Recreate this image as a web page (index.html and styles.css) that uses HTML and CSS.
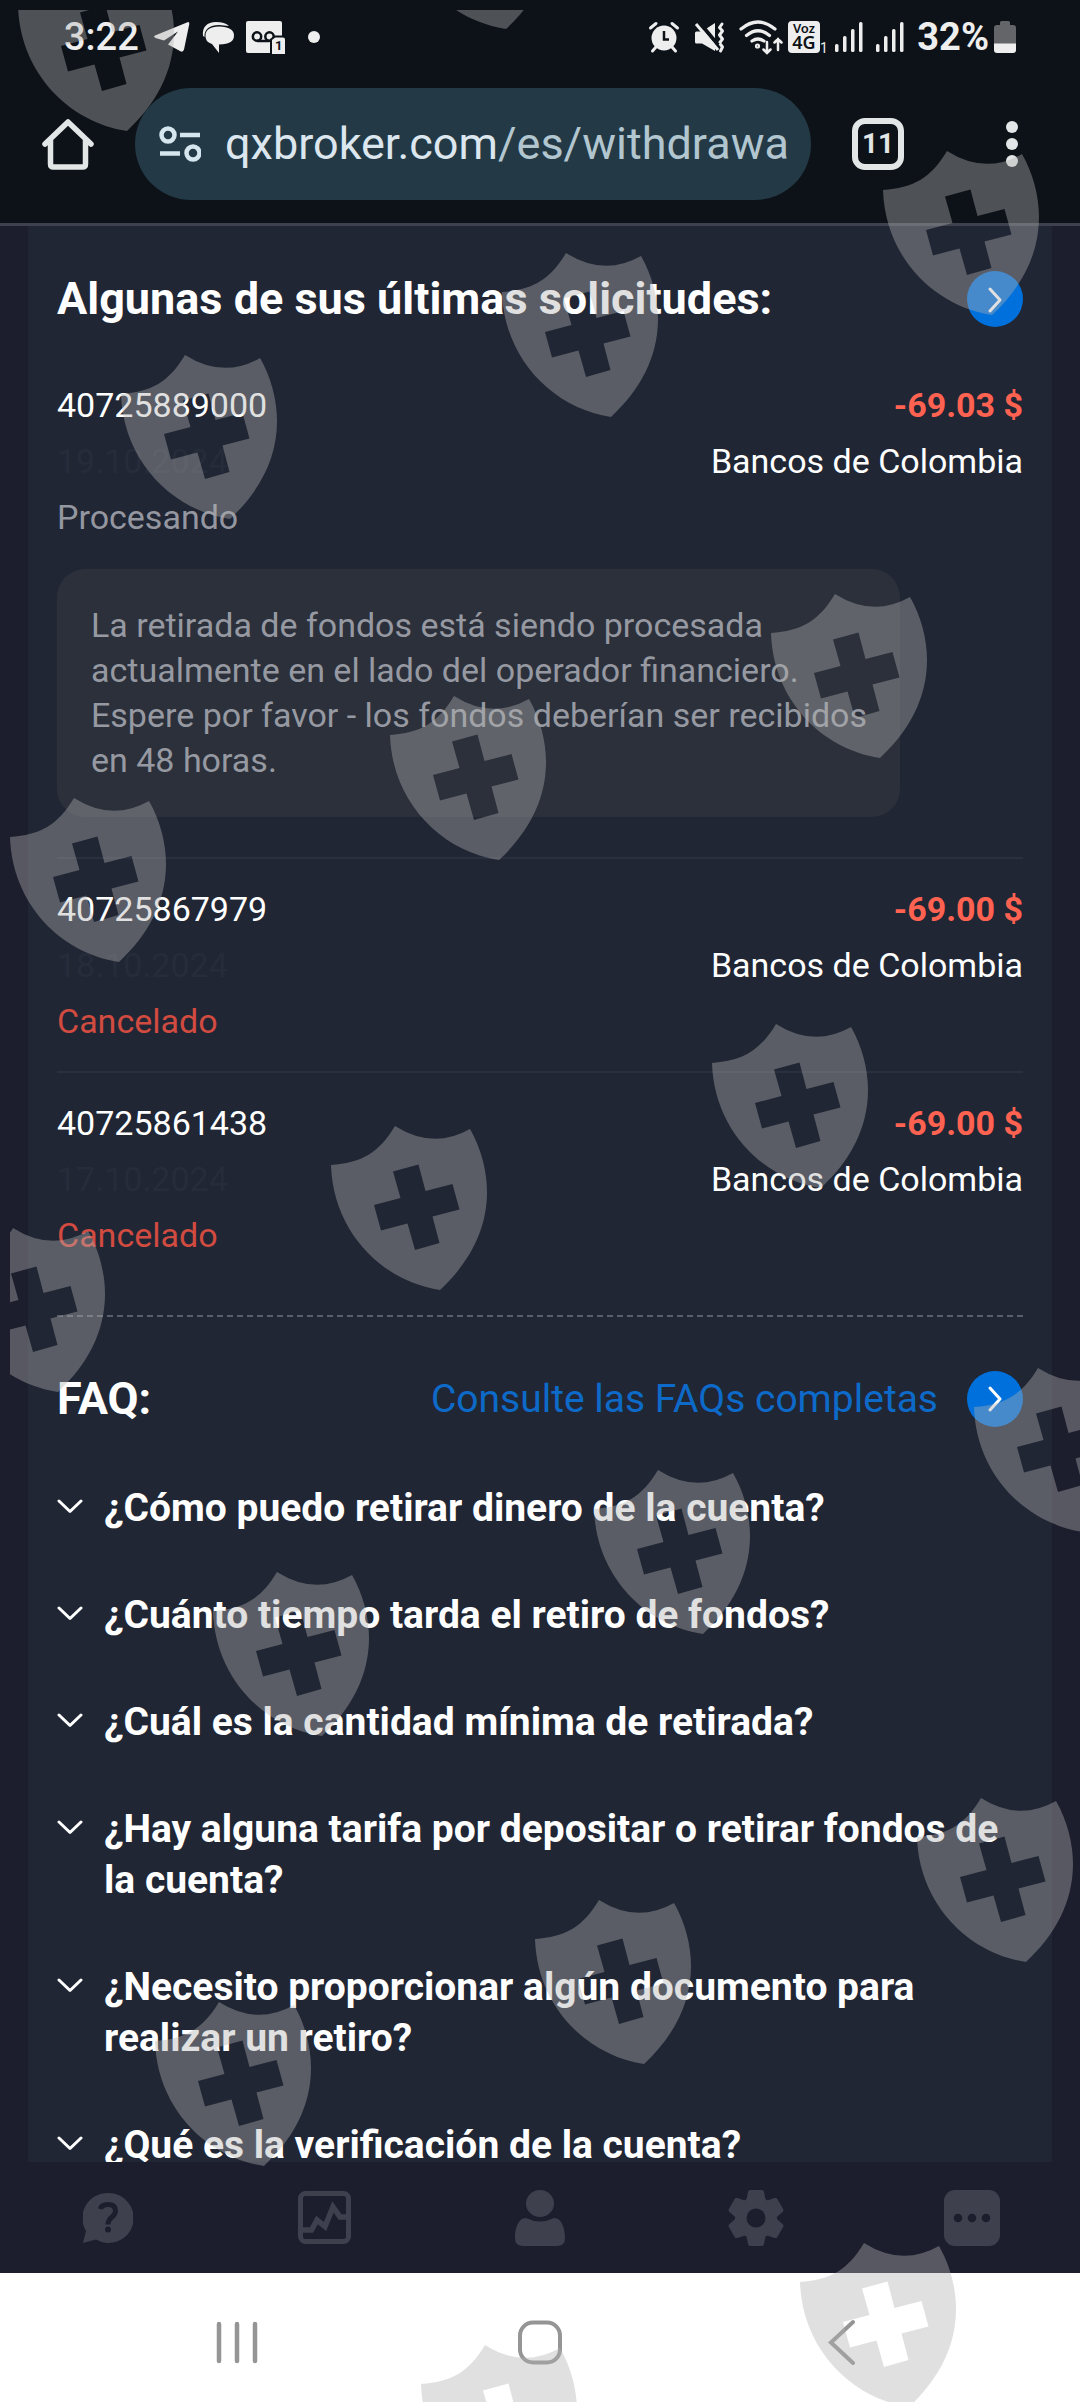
FILE: index.html
```html
<!DOCTYPE html>
<html lang="es">
<head>
<meta charset="utf-8">
<meta name="viewport" content="width=device-width, initial-scale=1">
<title>Retirada</title>
<link rel="stylesheet" href="styles.css">
</head>
<body>
<header class="chrome">
  <div class="status">
    <div class="status-left">
      <span class="clock">3:22</span>
      <svg width="38" height="32" viewBox="0 0 38 32" fill="#eeeeee" aria-hidden="true"><path d="M3 14.500 35.500 1.200Q37.500.600 37.300 3L32 28.500Q31 31.800 28 30L16 23.500 26 10.500 12 19.500 3.500 17Q1 15.600 3 14.500z"/></svg>
      <svg width="32" height="32" viewBox="0 0 32 32" fill="#eeeeee" aria-hidden="true"><path d="M1 15C0 6 5 1 14 1Q23 1 27 5L17 4C8 4 2 8 2.500 16z"/><path d="M17 5.500C27 5.500 32 9 32 14.500S28 23.500 17 23.500V32L10 23C5 21.500 3.500 18.500 3.500 14.500 3.500 9 8 5.500 17 5.500z"/></svg>
      <svg width="39" height="32" viewBox="0 0 39 32" aria-hidden="true"><rect width="36" height="32" rx="2" fill="#eeeeee"/><g fill="none" stroke="#0c1218" stroke-width="2.500"><circle cx="11" cy="15.500" r="4.200"/><circle cx="23.500" cy="15.500" r="4.200"/><path d="M11 20H23.500"/></g><path d="M25 34V18.500L29 15.500H37Q40 15.500 40 18.500V34z" fill="#eeeeee" stroke="#0c1218" stroke-width="2"/><text x="29" y="29" class="sim">1</text></svg>
      <svg width="34" height="32" viewBox="0 0 34 32" aria-hidden="true"><circle cx="17" cy="16" r="6" fill="#eeeeee"/></svg>
    </div>
    <div class="status-right">
      <svg width="40" height="32" viewBox="0 0 40 32" aria-hidden="true"><circle cx="15" cy="17" r="12.500" fill="#eeeeee"/><path d="M1.500 7 7 2.500M28.500 7 23 2.500M7 26 3.500 30M23 26 26.500 30" stroke="#eeeeee" stroke-width="3" stroke-linecap="round"/><path d="M15 10V18.500H20" fill="none" stroke="#0c1218" stroke-width="2.500"/></svg>
      <svg width="40" height="32" viewBox="0 0 40 32" aria-hidden="true"><path d="M1 12Q1 10.500 2.500 10.500H8L21 2V30L8 22.500H2.500Q1 22.500 1 21z" fill="#eeeeee"/><path d="M28 3 25.500 6.500 28.500 10 25.500 14 28.500 18 25.500 22 28.500 26 26.500 30" fill="none" stroke="#eeeeee" stroke-width="3" stroke-linecap="round" stroke-linejoin="round"/><path d="M5 1 24 24" stroke="#0c1218" stroke-width="4"/><path d="M2 3 24 29" stroke="#eeeeee" stroke-width="3"/></svg>
      <svg width="44" height="36" viewBox="0 0 44 36" fill="none" stroke="#eeeeee" stroke-width="3.200" stroke-linecap="round" aria-hidden="true"><path d="M2 10Q19-4 36 10M7.500 16.500Q19 7 30.500 16.500M13 22Q19 18 25 22"/><circle cx="18.500" cy="27" r="1"/><path d="M28 23V33.500M24.500 30.500 28 34 31.500 30.500M39 31V20M35.500 23.500 39 20 42.500 23.500" stroke-width="2.500"/></svg>
      <svg width="42" height="32" viewBox="0 0 42 32" aria-hidden="true"><rect width="32" height="32" rx="4" fill="#eeeeee"/><text x="16" y="12" class="voz">Voz</text><text x="16" y="28" class="gen">4G</text><text x="32" y="32" class="slot">1</text></svg>
      <svg width="36" height="32" viewBox="0 0 36 32" fill="#eeeeee" aria-hidden="true"><rect y="23" width="3.500" height="8" rx="1.500"/><rect x="8" y="15" width="3.500" height="16" rx="1.500"/><rect x="16" y="8" width="3.500" height="23" rx="1.500"/><rect x="24" y="1" width="3.500" height="30" rx="1.500"/></svg>
      <svg width="36" height="32" viewBox="0 0 36 32" fill="#eeeeee" aria-hidden="true"><rect y="23" width="3.500" height="8" rx="1.500"/><rect x="8" y="15" width="3.500" height="16" rx="1.500"/><rect x="16" y="8" width="3.500" height="23" rx="1.500"/><rect x="24" y="1" width="3.500" height="30" rx="1.500"/></svg>
      <span class="battery-text">32%</span>
      <svg width="22" height="32" viewBox="0 0 22 32" aria-hidden="true"><path d="M6 1.500Q6 0 7.500 0H14.500Q16 0 16 1.500V4H19Q22 4 22 7V23H0V7Q0 4 3 4H6z" fill="#646568"/><path d="M0 22.500H22V29Q22 32 19 32H3Q0 32 0 29z" fill="#eeeeee"/></svg>
    </div>
  </div>
  <div class="toolbar">
    <button class="icon-btn" aria-label="Inicio"><svg width="52" height="52" viewBox="0 0 52 52" fill="none" stroke="#e3e6e6" stroke-width="5.500" stroke-linecap="round" stroke-linejoin="round"><path d="M3 26 26 4 49 26M8.500 22V46Q8.500 49 11.500 49H40.500Q43.500 49 43.500 46V22"/></svg></button>
    <button class="address">
      <svg width="42" height="38" viewBox="0 0 42 38" fill="none" stroke="#d6e6ef" stroke-width="4.500" aria-hidden="true"><circle cx="9" cy="10" r="6.500"/><path d="M21 10H41M1 28.500H21"/><circle cx="34" cy="28" r="6.500"/></svg>
      <span class="url">qxbroker.com<span class="path">/es/withdrawal</span></span>
    </button>
    <button class="tabs" aria-label="Pestañas">11</button>
    <button class="icon-btn menu" aria-label="Menú"><svg width="52" height="52" viewBox="0 0 52 52" fill="#e3e6e6"><circle cx="26" cy="9" r="6"/><circle cx="26" cy="26" r="6"/><circle cx="26" cy="43" r="6"/></svg></button>
  </div>
</header>

<main class="page">
  <div class="panel">
    <section class="requests">
      <div class="section-head">
        <h2>Algunas de sus últimas solicitudes:</h2>
        <a href="#" class="go" aria-label="Ver todas"><svg width="56" height="56" viewBox="0 0 56 56" fill="none" stroke="#ffffff" stroke-width="3" stroke-linecap="round" stroke-linejoin="round"><path d="M23 18 33 29 23 40"/></svg></a>
      </div>
      <ul class="list">
        <li class="entry">
          <div class="row"><span>40725889000</span><strong class="amount">-69.03 $</strong></div>
          <div class="row"><time class="date">19.10.2024</time><span>Bancos de Colombia</span></div>
          <div class="row"><span class="pending">Procesando</span></div>
          <p class="note">La retirada de fondos está siendo procesada actualmente en el lado del operador financiero. Espere por favor - los fondos deberían ser recibidos en 48 horas.</p>
        </li>
        <li class="entry">
          <div class="row"><span>40725867979</span><strong class="amount">-69.00 $</strong></div>
          <div class="row"><time class="date">18.10.2024</time><span>Bancos de Colombia</span></div>
          <div class="row"><span class="cancelled">Cancelado</span></div>
        </li>
        <li class="entry">
          <div class="row"><span>40725861438</span><strong class="amount">-69.00 $</strong></div>
          <div class="row"><time class="date">17.10.2024</time><span>Bancos de Colombia</span></div>
          <div class="row"><span class="cancelled">Cancelado</span></div>
        </li>
      </ul>
    </section>
    <section class="faq">
      <div class="section-head">
        <h2>FAQ:</h2>
        <a href="#" class="faq-link">Consulte las FAQs completas <span class="go"><svg width="56" height="56" viewBox="0 0 56 56" fill="none" stroke="#ffffff" stroke-width="3" stroke-linecap="round" stroke-linejoin="round" aria-hidden="true"><path d="M23 17 33 28 23 39"/></svg></span></a>
      </div>
      <div class="questions">
        <button class="question" aria-expanded="false"><svg class="chev" viewBox="0 0 26 15"><path d="M2 2 13 12.500 24 2"/></svg><span>¿Cómo puedo retirar dinero de la cuenta?</span></button>
        <button class="question" aria-expanded="false"><svg class="chev" viewBox="0 0 26 15"><path d="M2 2 13 12.500 24 2"/></svg><span>¿Cuánto tiempo tarda el retiro de fondos?</span></button>
        <button class="question" aria-expanded="false"><svg class="chev" viewBox="0 0 26 15"><path d="M2 2 13 12.500 24 2"/></svg><span>¿Cuál es la cantidad mínima de retirada?</span></button>
        <button class="question" aria-expanded="false"><svg class="chev" viewBox="0 0 26 15"><path d="M2 2 13 12.500 24 2"/></svg><span>¿Hay alguna tarifa por depositar o retirar fondos de la cuenta?</span></button>
        <button class="question" aria-expanded="false"><svg class="chev" viewBox="0 0 26 15"><path d="M2 2 13 12.500 24 2"/></svg><span>¿Necesito proporcionar algún documento para realizar un retiro?</span></button>
        <button class="question" aria-expanded="false"><svg class="chev" viewBox="0 0 26 15"><path d="M2 2 13 12.500 24 2"/></svg><span>¿Qué es la verificación de la cuenta?</span></button>
      </div>
    </section>
  </div>
</main>

<nav class="app-nav">
  <a href="#" aria-label="Ayuda"><svg width="50" height="52" viewBox="0 0 50 52"><path d="M25 1A25 25 0 1 1 13 47.500L0 51 3 39A25 25 0 0 1 25 1z" fill="#3e404d"/><path d="M17.500 17Q18.500 12.500 25 12.500 32.500 12.500 32.500 19 32.500 22 29 25 25 28 25 32.500" fill="none" stroke="#1c1d2d" stroke-width="5"/><circle cx="25" cy="37.500" r="3" fill="#1c1d2d"/></svg></a>
  <a href="#" aria-label="Operar"><svg width="53" height="53" viewBox="0 0 53 53" fill="none" stroke="#3e404d" stroke-width="5"><rect x="2.500" y="2.500" width="48" height="48" rx="5"/><path d="M3 39H13.500L19 29 27 35.500 35 16 42 26H51" stroke-width="5.500"/></svg></a>
  <a href="#" aria-label="Cuenta"><svg width="50" height="56" viewBox="0 0 50 56" fill="#3e404d"><ellipse cx="25" cy="13.500" rx="14" ry="13.500"/><path d="M11 28Q18 31.500 25 31.500T39 28C47 28 50 39 50 48Q50 56 42 56H8Q0 56 0 48C0 39 3 28 11 28z"/></svg></a>
  <a href="#" aria-label="Ajustes"><svg width="56" height="56" viewBox="0 0 56 56"><g fill="#3e404d"><circle cx="28" cy="28" r="21"/><path id="tooth" d="M20 2Q20.500 0 22 0H34Q35.500 0 36 2L38 12H18zM20 54Q20.500 56 22 56H34Q35.500 56 36 54L38 44H18z"/><use href="#tooth" transform="rotate(60 28 28)"/><use href="#tooth" transform="rotate(120 28 28)"/></g><circle cx="28" cy="28" r="9.500" fill="#1c1d2d"/></svg></a>
  <a href="#" aria-label="Más"><svg width="56" height="56" viewBox="0 0 56 56"><rect width="56" height="56" rx="11" fill="#3e404d"/><g fill="#1c1d2d"><circle cx="14" cy="28" r="4.300"/><circle cx="28" cy="28" r="4.300"/><circle cx="42" cy="28" r="4.300"/></g></svg></a>
</nav>

<div class="system-nav">
  <button class="icon-btn" aria-label="Recientes"><svg width="44" height="46" viewBox="0 0 44 46" fill="none" stroke="#959595" stroke-width="4.500" stroke-linecap="round"><path d="M4 5V42M22 5V42M40 5V42"/></svg></button>
  <button class="icon-btn" aria-label="Pantalla de inicio"><svg width="44" height="46" viewBox="0 0 44 46" fill="none" stroke="#959595" stroke-width="4"><rect x="2" y="3.500" width="40" height="40" rx="13"/></svg></button>
  <button class="icon-btn" aria-label="Atrás"><svg width="44" height="46" viewBox="0 0 44 46" fill="none" stroke="#959595" stroke-width="4" stroke-linecap="round"><path d="M32 3 10 23.500 32 44"/></svg></button>
</div>

<svg class="shields" aria-hidden="true">
  <defs>
    <path id="shield" fill-rule="evenodd" d="M64 0Q102 24 139 3C150 22 156 45 156 66C156 104 138 137 109 164C50 155 2 105 0 39C30 37 48 27 64 0zM62 45.500 69.500 72 43 79 50 104.500 76.500 97.500 84 124 108.500 117 101.500 90.500 128.500 83.500 121.500 58 94.500 65 87.500 38.500z"/>
  </defs>
  <g fill="#b1b1b1" fill-opacity=".4">
    <use href="#shield" x="8" y="-43"/>
    <use href="#shield" x="387" y="-145"/>
    <use href="#shield" x="873" y="141"/>
    <use href="#shield" x="492" y="243"/>
    <use href="#shield" x="111" y="345"/>
    <use href="#shield" x="761" y="584"/>
    <use href="#shield" x="380" y="686"/>
    <use href="#shield" x="0" y="788"/>
    <use href="#shield" x="702" y="1014"/>
    <use href="#shield" x="321" y="1116"/>
    <use href="#shield" x="-61" y="1218"/>
    <use href="#shield" x="964" y="1358"/>
    <use href="#shield" x="584" y="1460"/>
    <use href="#shield" x="203" y="1562"/>
    <use href="#shield" x="907" y="1788"/>
    <use href="#shield" x="525" y="1890"/>
    <use href="#shield" x="145" y="1992"/>
    <use href="#shield" x="790" y="2233"/>
    <use href="#shield" x="411" y="2335"/>
  </g>
</svg>
</body>
</html>
```
FILE: styles.css
```css
* { box-sizing: border-box; }

body {
  margin: 0;
  height: 100vh;
  display: flex;
  flex-direction: column;
  position: relative;
  overflow: hidden;
  background: #1c1d2d;
  color: #ffffff;
  font-family: Roboto, "Liberation Sans", sans-serif;
  font-size: 34px;
  line-height: 56px;
}

button {
  margin: 0;
  padding: 0;
  border: 0;
  background: none;
  color: inherit;
  font: inherit;
  text-align: left;
}

a { color: inherit; text-decoration: none; }
svg { display: block; flex: none; }

/* browser chrome */
.chrome {
  background: #0c1218;
  border-bottom: 3px solid #3f424e;
}

.status {
  display: flex;
  justify-content: space-between;
  align-items: center;
  height: 74px;
  padding: 0 64px;
  color: #eeeeee;
  font-size: 38px;
  line-height: 40px;
}

.status svg { overflow: visible; }
.status-left, .status-right { display: flex; align-items: center; }
.status-left { gap: 12px; }
.status-right { gap: 5px; }
.clock { font-weight: 500; min-width: 76px; }
.battery-text { font-weight: 700; }
.sim { font: 700 13px Roboto, sans-serif; fill: #0c1218; }
.voz { font: 600 13px "Noto Sans", sans-serif; fill: #0c1218; text-anchor: middle; }
.gen { font: 600 18px "Noto Sans", sans-serif; fill: #0c1218; text-anchor: middle; }
.slot { font: 400 14px Roboto, sans-serif; fill: #eeeeee; }

.toolbar {
  display: flex;
  align-items: center;
  gap: 41px;
  padding: 14px 42px 23px;
}

.icon-btn { display: flex; align-items: center; justify-content: center; }

.address {
  flex: 1;
  min-width: 0;
  display: flex;
  align-items: center;
  gap: 24px;
  height: 112px;
  padding: 0 23px 0 24px;
  border-radius: 56px;
  background: #233945;
  color: #dce6ee;
}

.url {
  flex: 1;
  min-width: 0;
  overflow: hidden;
  white-space: nowrap;
  font-size: 45px;
  line-height: 64px;
}

.path { color: #b2c6d0; }

.tabs {
  width: 52px;
  height: 52px;
  border: 6px solid #e3e6e6;
  border-radius: 13px;
  color: #e3e6e6;
  font-size: 28px;
  font-weight: 700;
  line-height: 40px;
  text-align: center;
}

.menu { margin-left: 41px; }

/* page content */
.page {
  flex: 1;
  min-height: 0;
  overflow: hidden auto;
  scrollbar-width: none;
  padding: 0 28px;
}

.panel {
  padding: 45px 29px 56px;
  background: #202634;
}

.section-head {
  display: flex;
  align-items: center;
  justify-content: space-between;
}

h2 {
  margin: 0;
  font-size: 45px;
  font-weight: 700;
  line-height: 56px;
}

.go {
  display: block;
  width: 56px;
  height: 56px;
  border-radius: 50%;
  background: #0071dc;
}

.list {
  margin: 0;
  padding: 28px 0 30px;
  list-style: none;
  border-bottom: 2px dashed #5a5e69;
}

.entry { padding: 22px 0; }
.entry + .entry { border-top: 2px solid #2a303f; }
.row { display: flex; justify-content: space-between; }
.amount { color: #ff6251; font-weight: 700; }
.date { color: #272c3a; }
.pending { color: #9496a0; }
.cancelled { color: #d14b40; }

.note {
  max-width: 843px;
  margin: 24px 0 18px;
  padding: 34px 20px 34px 34px;
  border-radius: 28px;
  background: #2b303b;
  color: #9699a1;
  line-height: 45px;
}

.faq { padding-top: 54px; }

.faq-link {
  display: flex;
  align-items: center;
  gap: 29px;
  color: #0e6ac8;
  font-size: 39px;
}

.questions {
  display: flex;
  flex-direction: column;
  gap: 56px;
  padding-top: 56px;
}

.question {
  display: flex;
  gap: 21px;
  font-size: 39px;
  font-weight: 700;
  line-height: 51px;
}

.chev {
  width: 26px;
  height: 15px;
  margin-top: 16px;
  fill: none;
  stroke: #ffffff;
  stroke-width: 3;
  stroke-linecap: round;
  stroke-linejoin: round;
}

/* bottom bars */
.app-nav {
  display: flex;
  height: 111px;
}

.app-nav a {
  flex: 1;
  display: flex;
  align-items: center;
  justify-content: center;
}

.system-nav {
  display: flex;
  height: 135px;
  padding: 2px 86px 0;
  background: #ffffff;
}

.system-nav .icon-btn { flex: 1; }

/* watermark */
.shields {
  position: absolute;
  top: 10px;
  left: 10px;
  width: calc(100% - 10px);
  height: calc(100% - 16px);
  overflow: hidden;
  pointer-events: none;
}
```
